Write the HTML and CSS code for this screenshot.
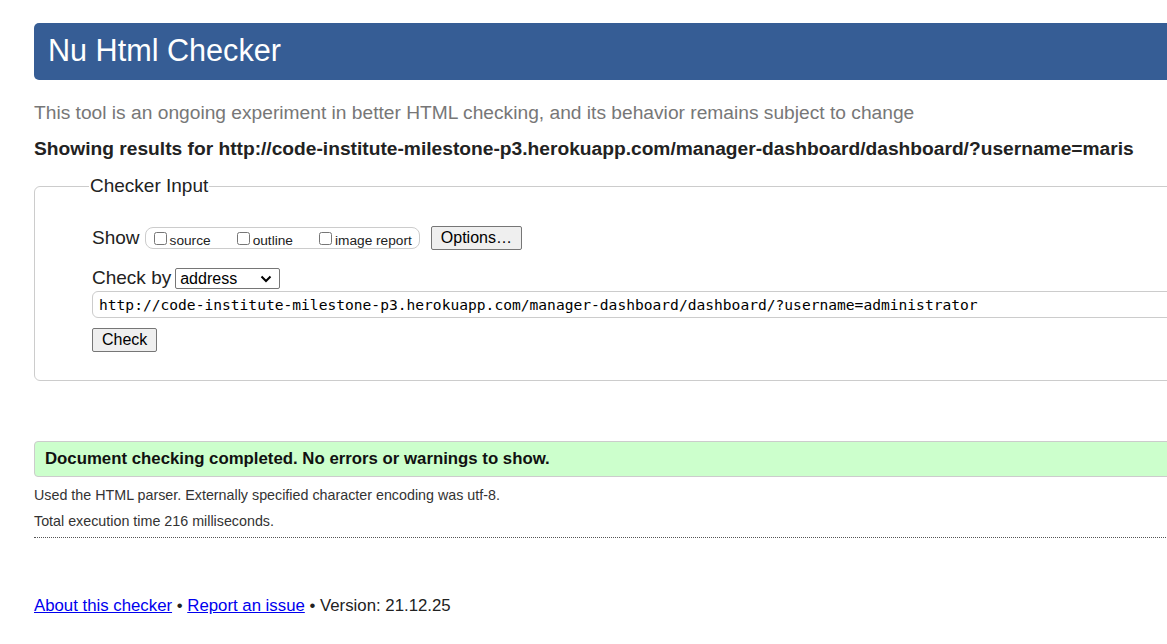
FILE: index.html
```html
<!DOCTYPE html>
<html lang="en">
<head>
<meta charset="utf-8">
<title>Showing results for http://code-institute-milestone-p3.herokuapp.com/manager-dashboard/dashboard/?username=maris - Nu Html Checker</title>
<link rel="stylesheet" href="styles.css">
</head>
<body>
<div class="page">
  <h1 class="title">Nu Html Checker</h1>
  <p class="intro">This tool is an ongoing experiment in better HTML checking, and its behavior remains subject to change</p>
  <p class="showing">Showing results for http://code-institute-milestone-p3.herokuapp.com/manager-dashboard/dashboard/?username=maris</p>

  <fieldset class="input-set">
    <legend class="legend">Checker Input</legend>
    <div class="row show-row">
      <span class="row-label">Show</span>
      <span class="opts">
        <label class="opt"><input type="checkbox" class="cb"><span>source</span></label>
        <label class="opt"><input type="checkbox" class="cb"><span>outline</span></label>
        <label class="opt"><input type="checkbox" class="cb"><span>image report</span></label>
      </span>
      <button class="btn options-btn" type="button">Options…</button>
    </div>
    <div class="row check-row">
      <span class="row-label">Check by</span>
      <span class="select-wrap">
        <select class="select"><option>address</option></select>
        <svg class="chev" width="12" height="8" viewBox="0 0 12 8"><path d="M1.5 1.5 L6 6 L10.5 1.5" fill="none" stroke="#000" stroke-width="2"/></svg>
      </span>
    </div>
    <div class="url-row">
      <input class="url" type="text" value="http://code-institute-milestone-p3.herokuapp.com/manager-dashboard/dashboard/?username=administrator">
    </div>
    <div class="submit-row">
      <button class="btn check-btn" type="submit">Check</button>
    </div>
  </fieldset>

  <div class="success">Document checking completed. No errors or warnings to show.</div>
  <p class="details">Used the HTML parser. Externally specified character encoding was utf-8.</p>
  <p class="details">Total execution time 216 milliseconds.</p>
  <hr class="sep">

  <p class="footer"><a href="#">About this checker</a> • <a href="#">Report an issue</a> • Version: 21.12.25</p>
</div>
</body>
</html>
```
FILE: styles.css
```css
html {
  overflow: hidden;
}
body {
  margin: 0;
  font-family: "Liberation Sans", Arial, sans-serif;
  color: #222;
  background: #fff;
}
.page {
  width: 1300px;
  padding: 23px 0 0 34px;
}
.title {
  margin: 0;
  height: 57px;
  box-sizing: border-box;
  background: #365d95;
  color: #fff;
  font-weight: normal;
  font-size: 30.6px;
  line-height: 55px;
  padding-left: 14px;
  border-radius: 5px;
}
.intro {
  margin: 22px 0 0;
  font-size: 19.2px;
  line-height: 22px;
  color: #777;
}
.showing {
  margin: 14px 0 0;
  font-size: 19.2px;
  line-height: 22px;
  font-weight: bold;
  color: #222;
}
.input-set {
  margin: 15px 0 0;
  border: 1px solid #ccc;
  border-radius: 6px;
  padding: 29px 0 28px 57px;
}
.legend {
  font-size: 19px;
  padding: 0 1px;
  margin-left: -3px;
  color: #222;
}
.row {
  display: flex;
  align-items: center;
}
.row-label {
  font-size: 19px;
}
.opts {
  display: inline-flex;
  align-items: center;
  gap: 26px;
  margin-left: 5px;
  height: 22px;
  box-sizing: border-box;
  border: 1px solid #ccc;
  border-radius: 8px;
  padding: 0 7px 0 8px;
}
.opt {
  display: inline-flex;
  align-items: center;
  font-size: 13.7px;
}
.cb {
  margin: 0 3px 0 0;
  width: 13px;
  height: 13px;
}
.opt span {
  position: relative;
  top: 2px;
}
.btn {
  font-family: "Liberation Sans", Arial, sans-serif;
  font-size: 16px;
  background: #efefef;
  border: 1px solid #767676;
  border-radius: 2px;
  color: #000;
  padding: 0 10px;
  height: 24px;
}
.options-btn {
  margin-left: 11px;
  padding: 0 9px;
}
.check-row {
  margin-top: 17px;
}
.select-wrap {
  position: relative;
  margin-left: 4px;
  display: inline-block;
}
.select {
  appearance: none;
  -webkit-appearance: none;
  font-family: "Liberation Sans", Arial, sans-serif;
  font-size: 16px;
  width: 105px;
  height: 21px;
  border: 1px solid #767676;
  border-radius: 2px;
  background: #fff;
  color: #000;
  padding: 0 0 0 4px;
  line-height: 19px;
}
.chev {
  position: absolute;
  right: 8px;
  top: 7px;
  pointer-events: none;
}
.url-row {
  margin-top: 2px;
}
.url {
  box-sizing: border-box;
  width: 1200px;
  height: 27px;
  border: 1px solid #ccc;
  border-radius: 6px;
  padding: 0 6px;
  font-family: "DejaVu Sans Mono", "Liberation Mono", monospace;
  font-size: 14.6px;
  color: #000;
}
.submit-row {
  margin-top: 10px;
}
.check-btn {
  padding: 0 9px;
}
.success {
  margin-top: 60px;
  height: 36px;
  box-sizing: border-box;
  border: 1px solid #ccc;
  border-radius: 4px;
  background: #ccffcc;
  font-weight: bold;
  font-size: 16.8px;
  line-height: 34px;
  padding-left: 10px;
  color: #111;
}
.details {
  margin: 10px 0 0;
  font-size: 14.3px;
  line-height: 16px;
  color: #333;
}
.details + .details {
  margin-top: 10px;
}
.sep {
  margin: 8px 0 0;
  border: 0;
  border-top: 1px dotted #555;
  height: 0;
}
.footer {
  margin: 58px 0 0;
  font-size: 16.8px;
  color: #222;
}
.footer a {
  color: #00e;
}
```
